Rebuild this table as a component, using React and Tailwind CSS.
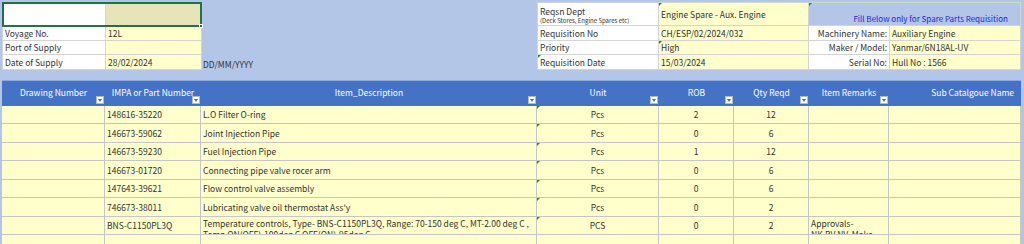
import React from "react";

const cols = [
  { key: "drawing", label: "Drawing Number", w: "w-[103px]", filter: true },
  { key: "impa", label: "IMPA or Part Number", w: "w-[96px]", filter: true },
  { key: "desc", label: "Item_Description", w: "w-[336px]", filter: true },
  { key: "unit", label: "Unit", w: "w-[122px]", filter: true },
  { key: "rob", label: "ROB", w: "w-[75px]", filter: true },
  { key: "qty", label: "Qty Reqd", w: "w-[75px]", filter: true },
  { key: "remarks", label: "Item Remarks", w: "w-[80px]", filter: true },
  { key: "sub", label: "Sub Catalgoue Name", w: "w-[132px]", filter: false },
];

const items = [
  { impa: "148616-35220", desc: "L.O Filter O-ring", unit: "Pcs", rob: "2", qty: "12" },
  { impa: "146673-59062", desc: "Joint Injection Pipe", unit: "Pcs", rob: "0", qty: "6" },
  { impa: "146673-59230", desc: "Fuel Injection Pipe", unit: "Pcs", rob: "1", qty: "12" },
  { impa: "146673-01720", desc: "Connecting pipe valve rocer arm", unit: "Pcs", rob: "0", qty: "6" },
  { impa: "147643-39621", desc: "Flow control valve assembly", unit: "Pcs", rob: "0", qty: "6" },
  { impa: "746673-38011", desc: "Lubricating valve oil thermostat Ass'y", unit: "Pcs", rob: "0", qty: "2" },
];

function Corner() {
  return (
    <span className="absolute left-0 top-0 w-0 h-0 border-t-[3px] border-r-[3px] border-t-[#2a8a2a] border-r-transparent" />
  );
}

function FilterBtn() {
  return (
    <span className="absolute right-[1px] bottom-[2px] w-[8px] h-[8px] bg-white border border-[#b8b8b8] flex items-center justify-center">
      <svg width="4" height="3" viewBox="0 0 4 3">
        <path d="M0 0h4L2 3z" fill="#2e8b57" />
      </svg>
    </span>
  );
}

function Cell({ className = "", children }) {
  return <div className={`flex items-center px-[2px] whitespace-nowrap overflow-hidden ${className}`}>{children}</div>;
}

export default function App() {
  return (
    <div className="w-[1024px] h-[244px] bg-[#b4c6e7] overflow-hidden font-['Noto_Sans_CJK_SC','Noto_Sans',sans-serif] text-[8.5px] leading-[11px] text-[#333]">
      {/* Top form */}
      <div className="flex h-[80px] pt-[2px] pl-[2px]">
        <div className="relative self-start grid grid-cols-[102px_95px] grid-rows-[22px_14px_13px_14px] gap-px bg-[#d4d4d4] border border-[#d4d4d4]">
          <div className="bg-white" />
          <div className="bg-[#e6e4b8]" />
          <Cell className="bg-white">Voyage No.</Cell>
          <Cell className="bg-[#ffffcc]">12L</Cell>
          <Cell className="bg-white">Port of Supply</Cell>
          <Cell className="bg-[#ffffcc]" />
          <Cell className="bg-white">Date of Supply</Cell>
          <Cell className="bg-[#ffffcc]">28/02/2024</Cell>
          <span className="absolute left-[-1px] top-[-1px] w-[200px] h-[25px] border-2 border-[#217346]" />
          <span className="absolute left-[196px] top-[21px] w-[4px] h-[4px] bg-[#217346] border border-white" />
        </div>
        <div className="flex-1 self-start pt-[57px] pl-[1px]">DD/MM/YYYY</div>
        <div className="self-start mr-[3px] grid grid-cols-[120px_149px_80px_130px] grid-rows-[22px_14px_13px_14px] gap-px bg-[#d4d4d4] border border-[#d4d4d4]">
          <div className="bg-white px-[2px] pt-[3px] flex flex-col">
            <span className="leading-[11px]">Reqsn Dept</span>
            <span className="text-[6px] leading-[8px]">(Deck Stores, Engine Spares etc)</span>
          </div>
          <Cell className="relative bg-[#ffffcc]">
            <Corner />
            Engine Spare - Aux. Engine
          </Cell>
          <div className="relative col-span-2 bg-[#b4c6e7] flex items-end justify-end pr-[12px] pb-[1px] text-[8px] text-[#1f1fe0]">
            <Corner />
            Fill Below only for Spare Parts Requisition
          </div>
          <Cell className="bg-white">Requisition No</Cell>
          <Cell className="bg-[#ffffcc]">CH/ESP/02/2024/032</Cell>
          <Cell className="bg-white justify-end">Machinery Name:</Cell>
          <Cell className="bg-[#ffffcc]">Auxiliary Engine</Cell>
          <Cell className="bg-white">Priority</Cell>
          <Cell className="relative bg-[#ffffcc]">
            <Corner />
            High
          </Cell>
          <Cell className="bg-white justify-end">Maker / Model:</Cell>
          <Cell className="bg-[#ffffcc]">Yanmar/6N18AL-UV</Cell>
          <Cell className="relative bg-white">
            <Corner />
            Requisition Date
          </Cell>
          <Cell className="bg-[#ffffcc]">15/03/2024</Cell>
          <Cell className="bg-white justify-end">Serial No:</Cell>
          <Cell className="bg-[#ffffcc]">Hull No : 1566</Cell>
        </div>
      </div>

      {/* Table */}
      <div className="ml-[2px] w-[1019px]">
        <div className="flex h-[26px] bg-[#4472c4] text-white border-t border-[#8ea9db]">
          {cols.map((c) => (
            <div
              key={c.key}
              className={`relative ${c.w} flex items-center pb-[2px] whitespace-nowrap ${c.key === "sub" ? "justify-end pr-[7px]" : "justify-center"}`}
            >
              {c.label}
              {c.filter && <FilterBtn />}
            </div>
          ))}
        </div>

        {items.map((it, i) => (
          <div
            key={it.impa}
            className={`flex bg-[#ffffcc] border-b border-[#c6c6c6] ${i % 2 === 0 ? "h-[18px]" : "h-[19px]"}`}
          >
            <Cell className="w-[103px] border-r border-[#c6c6c6]" />
            <Cell className="w-[96px] border-r border-[#c6c6c6]">{it.impa}</Cell>
            <Cell className="w-[336px] border-r border-[#c6c6c6]">{it.desc}</Cell>
            <Cell className="relative w-[122px] border-r border-[#c6c6c6] justify-center">
              <Corner />
              {it.unit}
            </Cell>
            <Cell className="w-[75px] border-r border-[#c6c6c6] justify-center">{it.rob}</Cell>
            <Cell className="w-[75px] border-r border-[#c6c6c6] justify-center">{it.qty}</Cell>
            <Cell className="w-[80px] border-r border-[#c6c6c6]" />
            <Cell className="w-[132px] border-r border-[#c6c6c6]" />
          </div>
        ))}

        <div className="flex h-[18px] bg-[#ffffcc] border-b border-[#c6c6c6]">
          <Cell className="w-[103px] border-r border-[#c6c6c6]" />
          <Cell className="w-[96px] border-r border-[#c6c6c6]">BNS-C1150PL3Q</Cell>
          <div className="w-[336px] border-r border-[#c6c6c6] px-[2px] pt-[1px] leading-[11px] overflow-hidden whitespace-nowrap">
            Temperature controls, Type- BNS-C1150PL3Q, Range: 70-150 deg C, MT-2.00 deg C ,
            <br />
            Temp ON(OFF)-100deg C OFF(ON)-95deg C
          </div>
          <Cell className="relative w-[122px] border-r border-[#c6c6c6] justify-center">
            <Corner />
            PCS
          </Cell>
          <Cell className="w-[75px] border-r border-[#c6c6c6] justify-center">0</Cell>
          <Cell className="w-[75px] border-r border-[#c6c6c6] justify-center">2</Cell>
          <div className="w-[80px] border-r border-[#c6c6c6] px-[2px] pt-[1px] leading-[11px] overflow-hidden whitespace-nowrap">
            Approvals-
            <br />
            NK,BV,NV, Make-
          </div>
          <Cell className="w-[132px] border-r border-[#c6c6c6]" />
        </div>

        <div className="flex h-[18px] bg-[#ffffcc] border-b border-[#c6c6c6]">
          <div className="w-[103px] border-r border-[#c6c6c6]" />
          <div className="w-[96px] border-r border-[#c6c6c6]" />
          <div className="w-[336px] border-r border-[#c6c6c6]" />
          <div className="w-[122px] border-r border-[#c6c6c6]" />
          <div className="w-[75px] border-r border-[#c6c6c6]" />
          <div className="w-[75px] border-r border-[#c6c6c6]" />
          <div className="w-[80px] border-r border-[#c6c6c6]" />
          <div className="w-[132px] border-r border-[#c6c6c6]" />
        </div>
      </div>
    </div>
  );
}
